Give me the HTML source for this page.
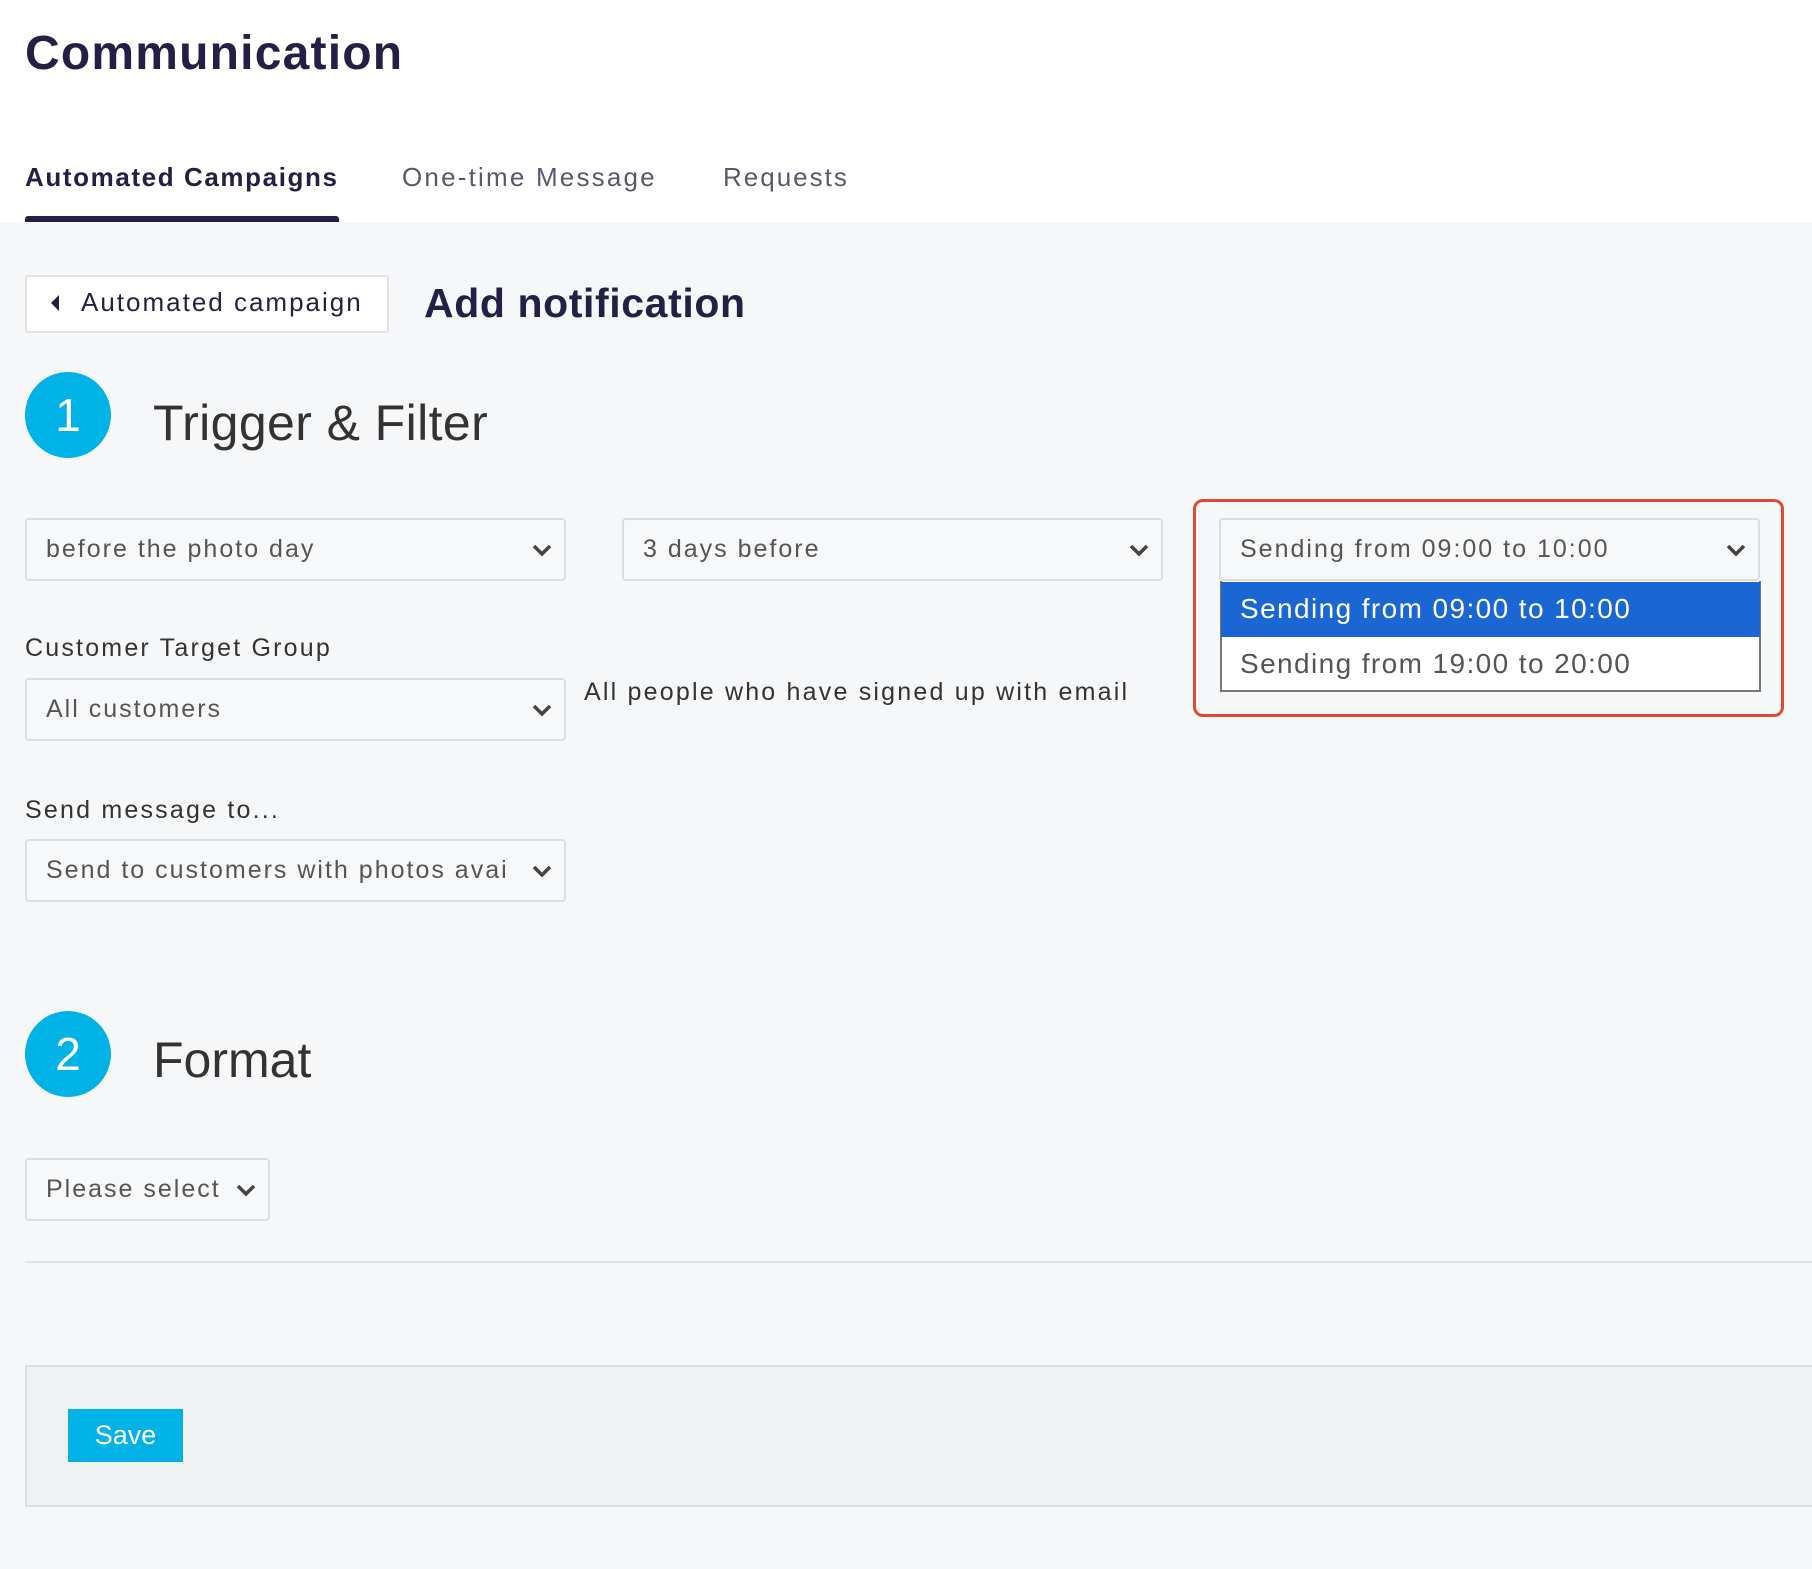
<!DOCTYPE html>
<html><head><meta charset="utf-8"><style>
*{box-sizing:border-box;margin:0;padding:0}
body{width:1812px;height:1569px;background:#f6f7f9;font-family:"Liberation Sans",sans-serif;position:relative;overflow:hidden;color:#333}
.a{position:absolute;white-space:nowrap}
.hdr{position:absolute;left:0;top:0;width:1812px;height:222px;background:#fff}
.sel{position:absolute;border:2px solid #dcdde0;border-radius:4px;background:#f7f8fa;font-size:25px;letter-spacing:2px;color:#555;padding-left:19px;display:flex;align-items:center;white-space:nowrap;overflow:hidden}
.sel svg{position:absolute;right:12px;top:50%;margin-top:-6px}
.circ{position:absolute;width:86px;height:86px;border-radius:50%;background:#00b2e6;color:#fff;font-size:46px;display:flex;align-items:center;justify-content:center}
.lbl{position:absolute;font-size:25px;letter-spacing:2.2px;color:#333;white-space:nowrap}
</style></head><body>
<div class="hdr"></div>
<div class="a" style="left:25px;top:26px;font-size:48px;font-weight:bold;letter-spacing:1.2px;color:#241f45">Communication</div>
<div class="a" style="left:25px;top:162px;font-size:26px;font-weight:bold;letter-spacing:1.6px;color:#241f45">Automated Campaigns</div>
<div class="a" style="left:402px;top:162px;font-size:26px;letter-spacing:2.2px;color:#5a5870">One-time Message</div>
<div class="a" style="left:723px;top:162px;font-size:26px;letter-spacing:2px;color:#5a5870">Requests</div>
<div class="a" style="left:25px;top:216px;width:314px;height:6px;background:#241f45;border-radius:3px 3px 0 0"></div>

<div class="a" style="left:25px;top:275px;width:364px;height:58px;background:#fff;border:2px solid #e2e3e6;border-radius:3px"></div>
<svg class="a" style="left:50px;top:294px" width="10" height="18"><path d="M9 1 L1 9 L9 17Z" fill="#241f45"/></svg>
<div class="a" style="left:81px;top:287px;font-size:26px;letter-spacing:2px;color:#241f45">Automated campaign</div>
<div class="a" style="left:424px;top:280px;font-size:41px;font-weight:bold;letter-spacing:0.6px;color:#241f45">Add notification</div>

<div class="circ" style="left:25px;top:372px">1</div>
<div class="a" style="left:153px;top:394px;font-size:50px;letter-spacing:0.4px;color:#333">Trigger &amp; Filter</div>

<div class="sel" style="left:25px;top:518px;width:541px;height:63px">before the photo day<svg width="20" height="12"><path d="M2 2 L10 10 L18 2" stroke="#444" stroke-width="3.5" fill="none"/></svg></div>
<div class="sel" style="left:622px;top:518px;width:541px;height:63px">3 days before<svg width="20" height="12"><path d="M2 2 L10 10 L18 2" stroke="#444" stroke-width="3.5" fill="none"/></svg></div>

<div class="a" style="left:1193px;top:499px;width:591px;height:218px;border:3px solid #e04a35;border-radius:10px"></div>
<div class="sel" style="left:1219px;top:518px;width:541px;height:63px">Sending from 09:00 to 10:00<svg width="20" height="12"><path d="M2 2 L10 10 L18 2" stroke="#444" stroke-width="3.5" fill="none"/></svg></div>
<div class="a" style="left:1220px;top:581px;width:541px;height:111px;background:#fff;border:2px solid #777;border-top:none"></div>
<div class="a" style="left:1221px;top:582px;width:539px;height:55px;background:#1a66d2;color:#fff;font-size:28px;letter-spacing:1.4px;padding:11px 0 0 19px">Sending from 09:00 to 10:00</div>
<div class="a" style="left:1221px;top:648px;font-size:28px;letter-spacing:1.4px;color:#555;padding-left:19px">Sending from 19:00 to 20:00</div>

<div class="lbl" style="left:25px;top:634px">Customer Target Group</div>
<div class="sel" style="left:25px;top:678px;width:541px;height:63px">All customers<svg width="20" height="12"><path d="M2 2 L10 10 L18 2" stroke="#444" stroke-width="3.5" fill="none"/></svg></div>
<div class="lbl" style="left:584px;top:678px">All people who have signed up with email</div>

<div class="lbl" style="left:25px;top:796px">Send message to...</div>
<div class="sel" style="left:25px;top:839px;width:541px;height:63px"><span style="display:inline-block;width:475px;overflow:hidden">Send to customers with photos avai</span><svg width="20" height="12"><path d="M2 2 L10 10 L18 2" stroke="#444" stroke-width="3.5" fill="none"/></svg></div>

<div class="circ" style="left:25px;top:1011px">2</div>
<div class="a" style="left:153px;top:1031px;font-size:50px;color:#333">Format</div>

<div class="sel" style="left:25px;top:1158px;width:245px;height:63px">Please select<svg width="20" height="12"><path d="M2 2 L10 10 L18 2" stroke="#444" stroke-width="3.5" fill="none"/></svg></div>
<div class="a" style="left:25px;top:1261px;width:1787px;height:2px;background:#e2e3e6"></div>

<div class="a" style="left:25px;top:1365px;width:1800px;height:142px;background:#f0f1f3;border:2px solid #dcdde0"></div>
<div class="a" style="left:68px;top:1409px;width:115px;height:53px;background:#00b2e6;color:#fff;font-size:27px;display:flex;align-items:center;justify-content:center">Save</div>
</body></html>
